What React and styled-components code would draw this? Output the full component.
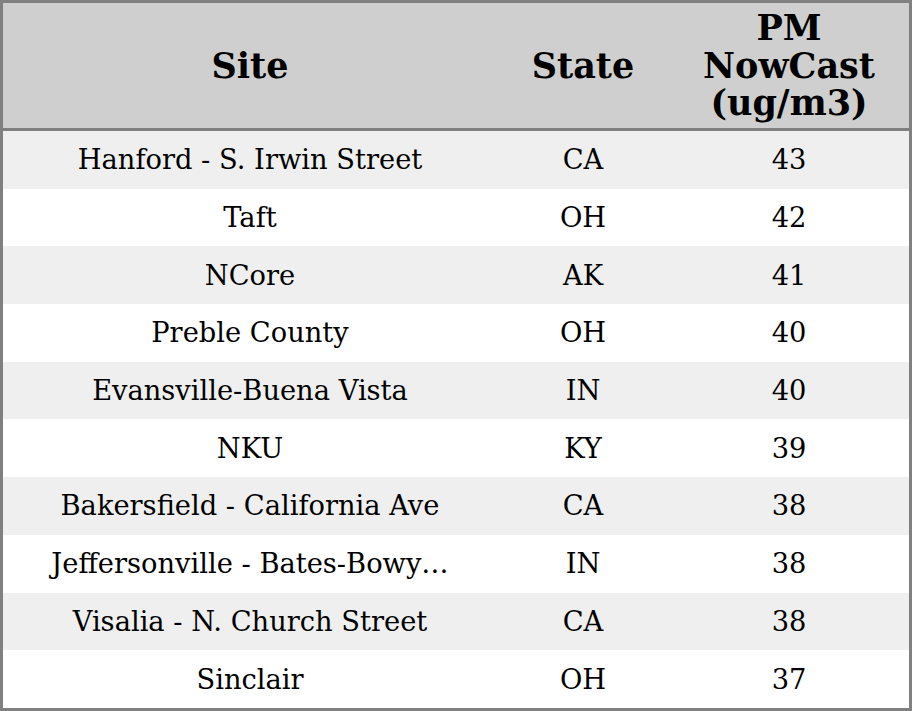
import styled, { createGlobalStyle } from 'styled-components'

const GlobalStyle = createGlobalStyle`
  html, body {
    margin: 0;
    padding: 0;
    background: #ffffff;
  }
  body {
    font-family: "DejaVu Serif", "Liberation Serif", serif;
    color: #000000;
  }
`

const Frame = styled.div`
  width: 912px;
  height: 711px;
  box-sizing: border-box;
  border: 3px solid #808080;
  overflow: hidden;
`

const Table = styled.table`
  width: 906px;
  table-layout: fixed;
  border-collapse: separate;
  border-spacing: 0;
`

const HeadCell = styled.th`
  width: ${(p) => p.$width}px;
  height: 128px;
  padding: 0 6px;
  box-sizing: border-box;
  background: #cfcfcf;
  border-bottom: 3px solid #808080;
  font-size: 35px;
  font-weight: bold;
  line-height: 37.5px;
  text-align: center;
  vertical-align: middle;
`

const Row = styled.tr`
  height: 57.7px;
  background: ${(p) => (p.$odd ? '#efefef' : '#ffffff')};
`

const Cell = styled.td`
  padding: 0 6px;
  font-size: 27.3px;
  text-align: center;
  vertical-align: middle;
  white-space: nowrap;
`

const rows = [
  ['Hanford - S. Irwin Street', 'CA', 43],
  ['Taft', 'OH', 42],
  ['NCore', 'AK', 41],
  ['Preble County', 'OH', 40],
  ['Evansville-Buena Vista', 'IN', 40],
  ['NKU', 'KY', 39],
  ['Bakersfield - California Ave', 'CA', 38],
  ['Jeffersonville - Bates-Bowy…', 'IN', 38],
  ['Visalia - N. Church Street', 'CA', 38],
  ['Sinclair', 'OH', 37],
]

export default function App() {
  return (
    <>
      <GlobalStyle />
      <Frame>
        <Table>
          <thead>
            <tr>
              <HeadCell $width={494}>Site</HeadCell>
              <HeadCell $width={172}>State</HeadCell>
              <HeadCell $width={240}>
                PM
                <br />
                NowCast
                <br />
                (ug/m3)
              </HeadCell>
            </tr>
          </thead>
          <tbody>
            {rows.map(([site, state, value], i) => (
              <Row key={site} $odd={i % 2 === 0}>
                <Cell>{site}</Cell>
                <Cell>{state}</Cell>
                <Cell>{value}</Cell>
              </Row>
            ))}
          </tbody>
        </Table>
      </Frame>
    </>
  )
}
